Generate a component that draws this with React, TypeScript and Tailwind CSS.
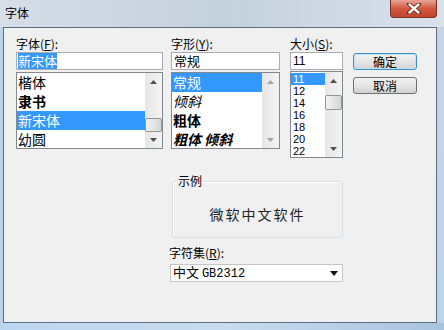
import React from 'react';

const cjk = "font-['Noto_Sans_CJK_SC','Liberation_Sans',sans-serif]";

const fontNames = [
  { name: '楷体', cls: '' },
  { name: '隶书', cls: 'font-bold' },
  { name: '新宋体', cls: '', selected: true },
  { name: '幼圆', cls: '' },
];

const styles = [
  { name: '常规', cls: '', selected: true },
  { name: '倾斜', cls: 'italic' },
  { name: '粗体', cls: 'font-bold' },
  { name: '粗体 倾斜', cls: 'font-bold italic' },
];

const sizes = ['11', '12', '14', '16', '18', '20', '22'];

function Arrow({ up, disabled }: { up?: boolean; disabled?: boolean }) {
  return (
    <div className="h-[17px] flex items-center justify-center shrink-0">
      <svg width="7" height="4" viewBox="0 0 7 4">
        <path
          d={up ? 'M0 4 L3.5 0 L7 4 Z' : 'M0 0 L3.5 4 L7 0 Z'}
          fill={disabled ? '#a3a3a3' : '#4f4f4f'}
        />
      </svg>
    </div>
  );
}

function ScrollBar({ thumbTop, thumbH, disabled }: { thumbTop?: number; thumbH?: number; disabled?: boolean }) {
  return (
    <div className="w-[17px] h-full flex flex-col bg-gradient-to-r from-[#e6e6e6] to-[#f3f3f3] shrink-0">
      <Arrow up disabled={disabled} />
      <div className="flex-1 relative">
        {!disabled && thumbH ? (
          <div
            className="absolute left-0 w-[17px] rounded-[2px] border border-[#959595] bg-gradient-to-r from-[#f4f4f4] to-[#d5d5d5]"
            style={{ top: thumbTop, height: thumbH }}
          />
        ) : null}
      </div>
      <Arrow disabled={disabled} />
    </div>
  );
}

function Label({ text, k }: { text: string; k: string }) {
  return (
    <div className={`h-[16px] text-[12px] leading-[16px] text-black ${cjk}`}>
      {text}(<span className="underline">{k}</span>):
    </div>
  );
}

export default function App() {
  return (
    <div className="w-[444px] h-[330px] flex flex-col overflow-hidden bg-gradient-to-b from-[#cbd7e4] via-[#d8e1ea] to-[#bcd1e8]">
      {/* title bar */}
      <div className="h-[27px] flex items-start shrink-0 bg-gradient-to-r from-[#d6dee8] via-[#c4d0dc] to-[#d9e2eb]">
        <div className={`pl-[5px] pt-[6px] text-[12px] leading-[14px] text-black ${cjk}`}>字体</div>
        <div className="flex-1" />
        <div className="mr-[7px] w-[47px] h-[18px] rounded-b-[4px] border border-t-0 border-[#7a2f24] bg-gradient-to-b from-[#e7a596] via-[#d2573f] to-[#c1432b] flex items-center justify-center">
          <svg width="14" height="11" viewBox="0 0 14 11">
            <path d="M2 1 L12 10 M12 1 L2 10" stroke="#5e2018" strokeWidth="4" strokeLinecap="round" />
            <path d="M2.5 1.5 L11.5 9.5 M11.5 1.5 L2.5 9.5" stroke="#ffffff" strokeWidth="2.4" strokeLinecap="round" />
          </svg>
        </div>
      </div>

      <div className="flex flex-1 min-h-0">
        <div className="w-[3px] shrink-0 bg-[#bcd3ea]" />
        {/* client */}
        <div className="flex-1 border border-[#5b6f84] bg-[#f0f0f0] flex flex-col">
          <div className="flex items-start pl-[12px] pt-[8px]">
            {/* font name */}
            <div className="w-[147px] flex flex-col">
              <Label text="字体" k="F" />
              <div className="h-[18px] border border-[#abadb3] bg-white flex items-center pl-[1px]">
                <span className={`bg-[#3399ff] text-white text-[13px] leading-[16px] ${cjk}`}>新宋体</span>
              </div>
              <div className="mt-[2px] h-[77px] border border-[#828790] bg-white flex">
                <div className="flex-1 overflow-hidden">
                  {fontNames.map((f) => (
                    <div
                      key={f.name}
                      className={`h-[19px] pl-[1px] text-[14px] leading-[19px] ${cjk} ${f.cls} ${f.selected ? 'bg-[#3399ff] text-white' : 'text-black'}`}
                    >
                      {f.name}
                    </div>
                  ))}
                </div>
                <ScrollBar thumbTop={28} thumbH={14} />
              </div>
            </div>

            {/* style */}
            <div className="ml-[8px] w-[109px] flex flex-col">
              <Label text="字形" k="Y" />
              <div className="h-[18px] border border-[#abadb3] bg-white flex items-center pl-[2px]">
                <span className={`text-black text-[13px] leading-[16px] ${cjk}`}>常规</span>
              </div>
              <div className="mt-[2px] h-[77px] border border-[#828790] bg-white flex">
                <div className="flex-1 overflow-hidden">
                  {styles.map((s) => (
                    <div
                      key={s.name}
                      className={`h-[19px] pl-[1px] text-[14px] leading-[19px] whitespace-pre ${cjk} ${s.cls} ${s.selected ? 'bg-[#3399ff] text-white' : 'text-black'}`}
                    >
                      {s.name}
                    </div>
                  ))}
                </div>
                <ScrollBar disabled />
              </div>
            </div>

            {/* size */}
            <div className="ml-[10px] w-[53px] flex flex-col">
              <Label text="大小" k="S" />
              <div className="h-[18px] border border-[#abadb3] bg-white flex items-center pl-[2px]">
                <span className="text-black text-[12px] leading-[16px] font-['Liberation_Sans',sans-serif]">11</span>
              </div>
              <div className="mt-[1px] h-[87px] border border-[#828790] bg-white flex">
                <div className="flex-1 overflow-hidden pt-[1px]">
                  {sizes.map((s, i) => (
                    <div
                      key={s}
                      className={`h-[12px] pl-[2px] text-[11px] leading-[12px] font-['Liberation_Sans',sans-serif] ${i === 0 ? 'bg-[#3399ff] text-white' : 'text-black'}`}
                    >
                      {s}
                    </div>
                  ))}
                </div>
                <ScrollBar thumbTop={6} thumbH={15} />
              </div>
            </div>

            {/* buttons */}
            <div className="ml-[10px] w-[64px] mt-[17px] flex flex-col">
              <button className={`h-[17px] rounded-[3px] border border-[#3c8fc8] shadow-[inset_0_0_0_1px_#bfe4f8] bg-gradient-to-b from-[#f2f2f2] via-[#e6e6e6] to-[#d2d2d2] text-[12px] leading-[15px] text-black ${cjk}`}>
                确定
              </button>
              <button className={`mt-[7px] h-[17px] rounded-[3px] border border-[#707070] bg-gradient-to-b from-[#f2f2f2] via-[#e6e6e6] to-[#d0d0d0] text-[12px] leading-[15px] text-black ${cjk}`}>
                取消
              </button>
            </div>
          </div>

          {/* sample */}
          <fieldset className="ml-[168px] mt-[16px] w-[171px] h-[64px] border border-[#d5dfe5] rounded-[3px] shadow-[inset_1px_1px_0_#ffffff]">
            <legend className={`ml-[3px] px-[2px] text-[12px] leading-[14px] text-black ${cjk}`}>示例</legend>
            <div className="h-[52px] flex items-center justify-center">
              <span className={`text-[14px] leading-[18px] tracking-[2px] text-[#222] ${cjk}`}>微软中文软件</span>
            </div>
          </fieldset>

          {/* charset */}
          <div className="ml-[165px] mt-[7px]">
            <Label text="字符集" k="R" />
          </div>
          <div className="ml-[166px] mt-[3px] w-[173px] h-[18px] border border-[#c6c6c6] bg-white flex items-center pl-[2px] pr-[4px]">
            <span className={`flex-1 text-[13px] leading-[16px] text-black ${cjk}`}>中文 <span className="font-['Liberation_Mono',monospace] text-[12px]">GB2312</span></span>
            <svg width="8" height="5" viewBox="0 0 8 5">
              <path d="M0 0 L4 5 L8 0 Z" fill="#111" />
            </svg>
          </div>
        </div>
        <div className="w-[7px] shrink-0 bg-gradient-to-b from-[#c7d5e3] to-[#bcd3ea]" />
      </div>
      <div className="h-[7px] shrink-0 bg-gradient-to-r from-[#bcd6f0] via-[#c9dcef] to-[#a9c3df]" />
    </div>
  );
}
